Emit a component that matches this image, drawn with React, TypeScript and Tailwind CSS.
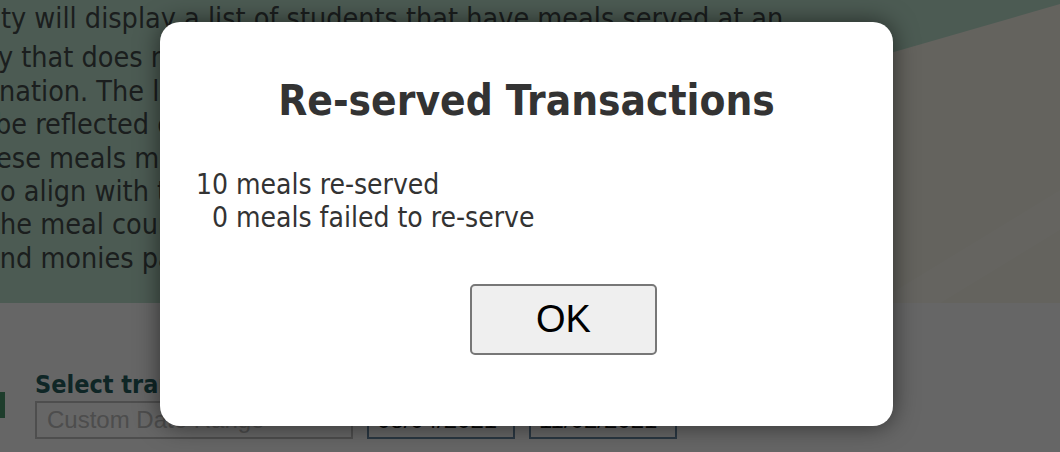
import React from "react";

const body = "font-['DejaVu_Sans_Condensed','DejaVu_Sans',sans-serif]";

export default function App() {
  const lines = [
    { t: "ty will display a list of students that have meals served at an", ml: "ml-[1px]" },
    { t: "y that does not have a complete student", ml: "-ml-[2px] mt-[6px]" },
    { t: "nation. The list of meals below will", ml: "-ml-[1px]" },
    { t: "be reflected on the transaction report", ml: "-ml-[5px]" },
    { t: "ese meals may be re-served in order", ml: "-ml-[4px]" },
    { t: "to align with the student's account", ml: "-ml-[10px]" },
    { t: "the meal counts in the reporting screen", ml: "-ml-[10px]" },
    { t: "and monies paid for these transactions.", ml: "-ml-[16px]" },
  ];
  return (
    <div className="relative w-[1060px] h-[452px] overflow-hidden bg-white">
      {/* page header area */}
      <div className="relative h-[303px] bg-[#bde3d0] overflow-hidden">
        <svg className="absolute left-0 top-0" width="1060" height="303" viewBox="0 0 1060 303">
          <polygon points="880,56 1060,4 1060,303 880,303" fill="#faf7eb" />
          <polygon points="880,300 1060,190 1060,230 880,340" fill="#fdfbf1" opacity="0.6" />
        </svg>
        <div className={`relative pt-[2px] text-[28.5px] leading-[33.4px] text-[#454d4b] whitespace-nowrap ${body}`}>
          {lines.map((l, i) => (
            <div key={i} className={l.ml}>
              {l.t}
            </div>
          ))}
        </div>
      </div>

      {/* lower form area */}
      <div className="flex">
        <div className="w-[5px] h-[26px] mt-[89px] bg-[#4b986e]" />
        <div className="ml-[30px] pt-[68px]">
          <div className={`text-[25px] font-bold leading-[28px] text-[#27605f] ${body}`}>
            Select transaction date range
          </div>
          <div className="mt-[2px] flex gap-[14px] font-['Liberation_Sans',Arial,sans-serif] text-[24px]">
            <div className="w-[318px] h-[38px] border-2 border-[#c4c4c4] pl-[10px] leading-[34px] text-[#c0c0c0]">
              Custom Date Range
            </div>
            <div className="w-[148px] h-[38px] border-2 border-[#6a8aa6] pl-[8px] leading-[34px] text-[#111]">
              08/04/2021
            </div>
            <div className="w-[148px] h-[38px] border-2 border-[#6a8aa6] pl-[8px] leading-[34px] text-[#111]">
              11/02/2021
            </div>
          </div>
        </div>
      </div>

      {/* modal overlay */}
      <div className="absolute inset-0 bg-black/60" />

      {/* dialog */}
      <div
        className={`absolute left-[160px] top-[22px] w-[733px] h-[404px] rounded-[20px] bg-white shadow-[0_0_24px_rgba(0,0,0,0.55)] flex flex-col ${body}`}
      >
        <div className="pt-[55px] text-center text-[42px] font-bold leading-[48px] text-[#333333]">
          Re-served Transactions
        </div>
        <div className="mt-[43px] pl-[36px] text-[28px] leading-[33px] text-[#333333] whitespace-pre">
          <div>10 meals re-served</div>
          <div>{"  0 meals failed to re-serve"}</div>
        </div>
        <div className="mt-[50px] flex justify-center pl-[74px]">
          <button className="w-[187px] h-[71px] rounded-[5px] border-2 border-[#777777] bg-[#efefef] text-[38px] text-black font-['Liberation_Sans',Arial,sans-serif]">
            OK
          </button>
        </div>
      </div>
    </div>
  );
}
